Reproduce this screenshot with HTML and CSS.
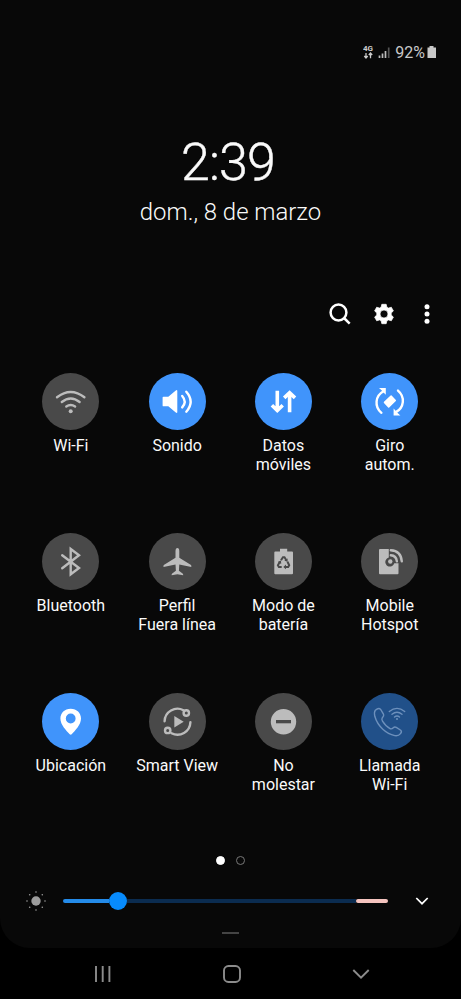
FILE: index.html
```html
<!DOCTYPE html>
<html lang="es">
<head>
<meta charset="utf-8">
<title>Panel rápido</title>
<link rel="stylesheet" href="styles.css">
</head>
<body>
<main class="panel">
  <header class="status">
    <svg class="net" width="29" height="18" viewBox="0 0 29 18">
      <text class="gen" x="0" y="8" textLength="10">4G</text>
      <path d="M3 10v5M1.300 13L3 15l1.700-2M7.500 15.300v-5M5.800 12L7.500 10l1.700 2" stroke="#ccc" stroke-width="1.300"/>
      <path d="M16.500 15v-2.500M19.500 15v-4.500M22.500 15V8" stroke="#bbb" stroke-width="1.700"/><path d="M25.700 15V4.500" stroke="#555" stroke-width="1.700"/>
    </svg>
    <span class="percent">92%</span>
    <svg width="9" height="14" viewBox="0 0 9 14"><path d="M2.500 1h4v1.500H9V13H.5V2.500h2z" fill="#c8c8c8"/></svg>
  </header>
  <section class="clock">
    <div class="time">2:39</div>
    <div class="date">dom., 8 de marzo</div>
  </section>
  <nav class="tools">
    <svg width="24" height="24" viewBox="0 0 24 24" stroke="#fff" stroke-width="2.500"><circle cx="10.500" cy="10.500" r="7.900"/><path d="M16 16l5.700 5.700"/></svg>
    <svg width="24" height="24" viewBox="0 0 24 24"><path fill="#fff" stroke="#fff" stroke-width=".7" stroke-linejoin="round" fill-rule="evenodd" d="M9.800 2.300h4.400l.7 2.900 1.500.9 2.900-.9 2.100 3.700-2.200 2.100v2l2.200 2.100-2.100 3.700-2.900-.9-1.500.9-.7 2.900H9.800l-.7-2.900-1.500-.9-2.900.9-2.100-3.700L4.800 13v-2L2.600 8.900 4.700 5.200l2.900.9 1.500-.9zM12 8a4 4 0 1 0 0 8a4 4 0 1 0 0-8z"/></svg>
    <svg width="24" height="24" viewBox="0 0 24 24"><g fill="#fff"><circle cx="12" cy="4.700" r="2.500"/><circle cx="12" cy="12" r="2.500"/><circle cx="12" cy="19.200" r="2.500"/></g></svg>
  </nav>
  <section class="tiles">
    <div class="tile"><svg class="disc" viewBox="0 0 57 57"><g class="line"><path d="M15 24.300Q28.700 13.500 42.400 24.300M19.800 29Q28.700 22 37.600 29M24.300 33.600Q28.700 30.500 33.100 33.600"/></g><circle class="fill" cx="28.700" cy="38.300" r="2"/></svg><span>Wi-Fi</span></div>
    <div class="tile on"><svg class="disc" viewBox="0 0 57 57"><path class="fill" d="M14.500 23.700H19.300L26.800 17.500Q28.300 16.500 28.300 18V39Q28.300 40.500 26.800 39.500L19.300 33.300H14.500Q13.600 33.300 13.600 32.400V24.600Q13.600 23.700 14.500 23.700z"/><path class="line" d="M33.200 23Q38.200 28.700 33.200 34.400M37.300 18.700Q46 28.700 37.300 38.700"/></svg><span>Sonido</span></div>
    <div class="tile on"><svg class="disc" viewBox="0 0 57 57"><path class="line thick" d="M22.300 17.800V37.500M16.900 32.300L22.300 37.500L27.700 32.300M34.600 39.200V19.500M29.200 24.900L34.600 19.700L40 24.900"/></svg><span>Datos<br>móviles</span></div>
    <div class="tile on"><svg class="disc" viewBox="0 0 57 57"><path class="line" d="M20.400 39.800C13 33.500 14.300 22.800 22.500 18.300M37 17.600C44.400 23.900 43.100 34.600 34.900 39.100"/><path class="fill" d="M18 15H24.800V21.800L22.500 19.500L20.500 17.200zM39.400 42.400H32.600V35.600L34.900 37.900L36.900 40.200z"/><path class="fill round" d="M23.500 29.400L30.100 23L34.300 27.500L27.700 33.900z"/></svg><span>Giro<br>autom.</span></div>

    <div class="tile"><svg class="disc" viewBox="0 0 57 57"><path class="line" d="M20.200 22.200L37 35L28.700 41.300V16L37 22.200L20.200 35.200"/></svg><span>Bluetooth</span></div>
    <div class="tile"><svg class="disc" viewBox="0 0 57 57"><path class="fill" d="M28.400 15Q30.200 15 30.300 18V24.700L42 32Q42.500 32.500 42.300 34L30.300 31.600L29.900 37.800L33.600 40.500Q34.300 41 34.200 42.300L28.400 41.300L22.600 42.300Q22.500 41 23.200 40.500L26.900 37.800L26.500 31.600L14.500 34Q14.300 32.500 14.800 32L26.500 24.700V18Q26.600 15 28.400 15z"/></svg><span>Perfil<br>Fuera línea</span></div>
    <div class="tile"><svg class="disc" viewBox="0 0 57 57"><path class="fill" d="M25 15.700H32.200V18.500H37Q38 18.500 38 19.500V40.300Q38 41.300 37 41.300H20.300Q19.300 41.300 19.300 40.300V19.500Q19.300 18.500 20.300 18.500H25z"/><path class="cut" d="M26 27.300L28 24.300H29.500L31.200 27M32.500 28.800L34.200 32.200L33.200 33.900H30.300M26.700 33.900H23.900L22.900 32.200L24.900 28.700"/><path class="cutfill" d="M32.600 25.400V29L29.300 27.400zM31 31.600V36.200L28.300 33.900zM22.700 29.100L26 27.600L26.200 31z"/></svg><span>Modo de<br>batería</span></div>
    <div class="tile"><svg class="disc" viewBox="0 0 57 57"><path class="fill" d="M19 16H27.800V24.500A4.600 4.600 0 1 0 33.300 30.300H37.500V40.300Q37.500 41.300 36.500 41.300H19Q18 41.300 18 40.300V17Q18 16 19 16z"/><circle class="fill" cx="29.300" cy="28.500" r="2.200"/><path class="line" d="M29.800 22.300Q35.300 22.700 35.900 28.300M29.800 17.300Q40 18 40.800 28.300"/></svg><span>Mobile<br>Hotspot</span></div>

    <div class="tile on"><svg class="disc" viewBox="0 0 57 57"><path class="fill" fill-rule="evenodd" d="M28.700 15.700C34.800 15.700 39 20 39 25.600C39 32 33 37.800 29.700 41.200Q28.700 42.100 27.700 41.200C24.400 37.800 18.400 32 18.400 25.600C18.400 20 22.600 15.700 28.700 15.700zM28.700 20.600A4.900 4.900 0 1 0 28.700 30.400A4.900 4.900 0 1 0 28.700 20.600z"/></svg><span>Ubicación</span></div>
    <div class="tile"><svg class="disc" viewBox="0 0 57 57"><path class="line" d="M15.600 28.200A12.900 12.900 0 0 1 34.500 17.200M41.400 29.200A12.900 12.900 0 0 1 22.500 40.200"/><g class="line"><circle cx="37.300" cy="20" r="2.700"/><circle cx="18.700" cy="37.400" r="2.700"/></g><path class="fill" d="M25.300 23L34.700 28.700L25.300 34.400z"/></svg><span>Smart View</span></div>
    <div class="tile"><svg class="disc" viewBox="0 0 57 57"><circle class="fill" cx="28.500" cy="28.700" r="12.700"/><rect class="cutfill" x="21" y="27" width="15" height="3.300"/></svg><span>No<br>molestar</span></div>
    <div class="tile on dim"><svg class="disc" viewBox="0 0 57 57"><path class="line thin" d="M14.300 17.300Q17.500 14.500 19.500 16.200L22.600 21.300Q23.300 22.800 21.200 25Q20.400 26 21.500 28.200Q24.800 33.600 29.400 35.800Q30.900 36.200 32.300 34.700Q33.600 33.500 35.300 34.400L39.700 37.200Q41.200 38.600 39.500 40.600Q37.500 43.200 33.800 42.600C25.500 40.800 16.800 33.800 13.800 23.300Q12.900 19 14.300 17.300z"/><path class="line thin" d="M28.300 18.500Q36 12.200 43.700 18.500M31 21.300Q36 17.300 41 21.300M33.500 24Q36 22 38.500 24"/><circle class="fill" cx="36" cy="26" r="1"/></svg><span>Llamada<br>Wi-Fi</span></div>
  </section>
  <div class="pages"><i class="dot current"></i><i class="dot"></i></div>
  <section class="brightness">
    <svg width="20" height="20" viewBox="0 0 20 20"><g fill="#9c9c9c"><circle cx="10" cy="10" r="4.700"/><circle cx="10" cy="1" r=".8"/><circle cx="10" cy="19" r=".8"/><circle cx="1" cy="10" r=".8"/><circle cx="19" cy="10" r=".8"/><circle cx="3.700" cy="3.700" r=".8"/><circle cx="16.300" cy="3.700" r=".8"/><circle cx="3.700" cy="16.300" r=".8"/><circle cx="16.300" cy="16.300" r=".8"/></g></svg>
    <div class="slider"><i class="level"></i><i class="knob"></i><i class="rest"></i><i class="high"></i></div>
    <svg width="14" height="10" viewBox="0 0 14 10"><path d="M1.300 2L7 7.700L12.700 2" stroke="#fff" stroke-width="1.700"/></svg>
  </section>
  <div class="handle"></div>
</main>
<footer class="navbar">
  <svg width="18" height="18" viewBox="0 0 18 18"><path d="M2 1v16M8.700 1v16M15.400 1v16" stroke="#8c8c8c" stroke-width="1.900"/></svg>
  <svg width="18" height="18" viewBox="0 0 18 18"><rect x="1" y="1" width="16" height="16" rx="4.500" stroke="#8c8c8c" stroke-width="1.900"/></svg>
  <svg width="18" height="18" viewBox="0 0 18 18"><path d="M1.300 5L9 12.700L16.700 5" stroke="#8c8c8c" stroke-width="1.900"/></svg>
</footer>
</body>
</html>
```
FILE: styles.css
```css
* { box-sizing: border-box; }
body {
  margin: 0;
  height: 999px;
  background: #000;
  color: #fafafa;
  font-family: Roboto, sans-serif;
  overflow: hidden;
}
svg { display: block; flex: none; fill: none; }
.panel {
  height: 948px;
  background: #080808;
  border-radius: 0 0 30px 30px;
  display: flex;
  flex-direction: column;
}
.status {
  height: 18px;
  margin-top: 43px;
  padding-right: 25px;
  display: flex;
  justify-content: flex-end;
  align-items: center;
  color: #c8c8c8;
}
.gen { font-size: 8px; font-weight: 700; fill: #ccc; }
.percent { font-size: 16px; line-height: 18px; margin: 2px 2px 0 3px; }
.clock { margin-top: 69px; text-align: center; font-weight: 300; }
.time {
  font-size: 52px;
  line-height: 66px;
  padding-right: 5px;
  letter-spacing: -0.8px;
  -webkit-text-stroke: 0.4px #fafafa;
}
.date { font-size: 23.900px; line-height: 32px; }
.tools {
  display: flex;
  gap: 19.500px;
  justify-content: flex-end;
  margin-top: 74px;
  padding-right: 22px;
}
.tiles {
  display: grid;
  grid-template-columns: repeat(4, 106.300px);
  grid-auto-rows: 160px;
  margin-top: 47px;
  padding-left: 17.700px;
}
.tile {
  display: flex;
  flex-direction: column;
  align-items: center;
  font-size: 16px;
  line-height: 18.600px;
  text-align: center;
  white-space: nowrap;
  --disc: #494949;
  --ink: #bcbcbc;
}
.tile.on { --disc: #4094fb; --ink: #fff; }
.tile.dim { --disc: #215089; --ink: #6d90bc; }
.disc {
  width: 57px;
  height: 57px;
  border-radius: 50%;
  background: var(--disc);
  margin-bottom: 7px;
}
.fill { fill: var(--ink); }
.line { stroke: var(--ink); stroke-width: 2.400; stroke-linecap: round; }
.line.thick { stroke-width: 3.600; stroke-linecap: butt; }
.line.thin { stroke-width: 1.400; }
.round { stroke: var(--ink); stroke-width: 1.500; stroke-linejoin: round; }
.cut { stroke: var(--disc); stroke-width: 2; }
.cutfill { fill: var(--disc); }
.pages {
  display: flex;
  justify-content: center;
  gap: 11px;
  margin-top: 3px;
}
.dot { width: 9px; height: 9px; border: 1.500px solid #777; border-radius: 50%; }
.current { background: #fff; border-color: #fff; }
.brightness {
  display: flex;
  align-items: center;
  height: 20px;
  margin-top: 26px;
  padding-left: 26px;
}
.slider { display: flex; align-items: center; width: 325px; margin: 0 27px 0 17px; }
.level { width: 46px; height: 3.500px; background: #248be9; border-radius: 2px 0 0 2px; }
.knob { width: 18px; height: 18px; border-radius: 50%; background: #078bfd; }
.rest { flex: 1; height: 3.500px; background: #0b2c50; }
.high { width: 32px; height: 3.500px; background: #f5c4bf; border-radius: 2px; }
.handle { width: 17px; height: 2px; background: #444; margin: 21px auto 0; }
.navbar {
  display: flex;
  align-items: center;
  justify-content: center;
  gap: 111px;
  height: 51px;
  padding-left: 2px;
}
```
